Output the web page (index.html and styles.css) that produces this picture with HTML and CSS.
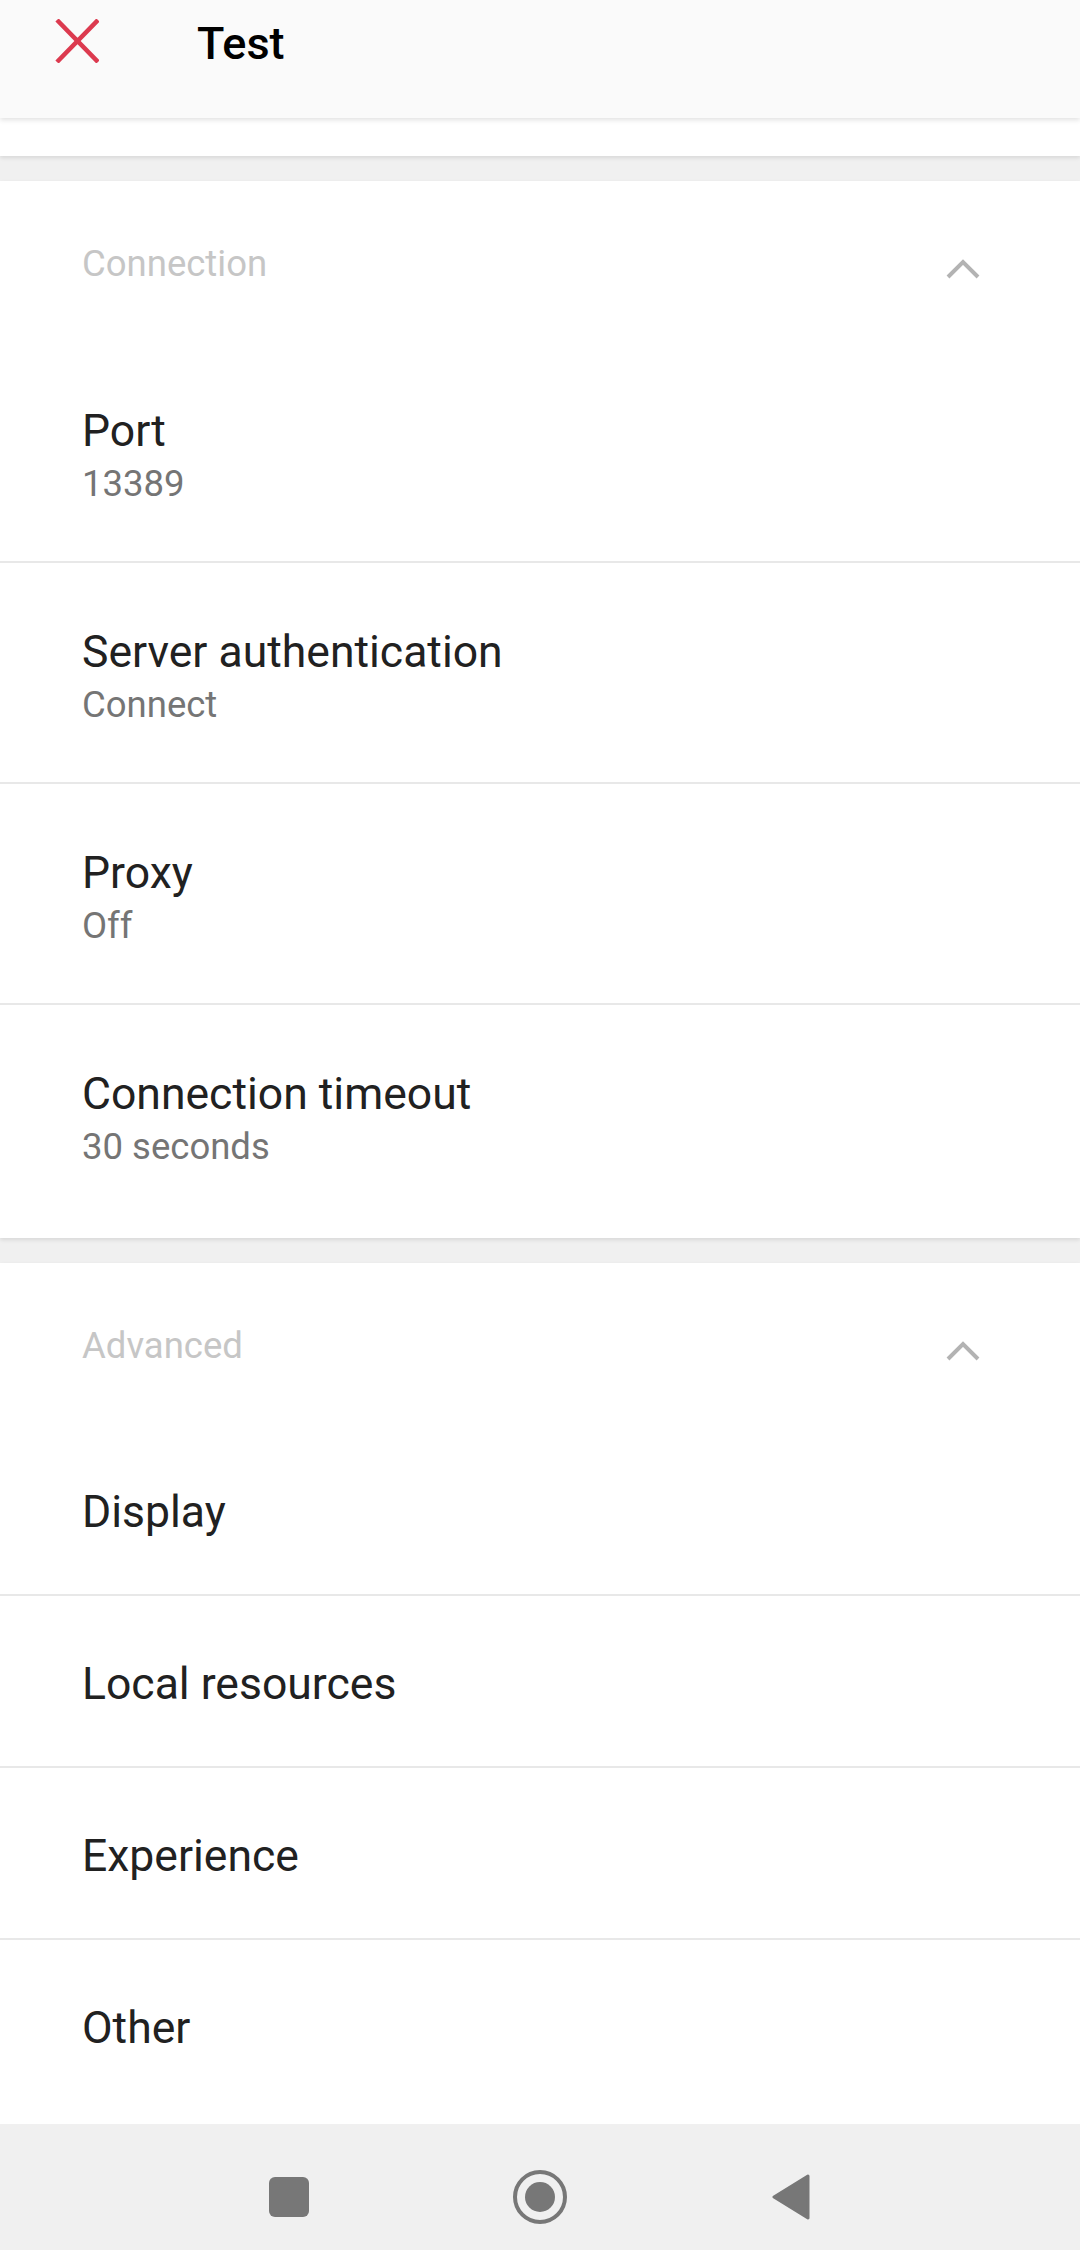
FILE: index.html
```html
<!DOCTYPE html>
<html lang="en">
<head>
    <meta charset="UTF-8">
    <meta name="viewport" content="width=device-width, initial-scale=1.0">
    <title>Test</title>
    <link rel="stylesheet" href="styles.css">
</head>
<body>
    <div class="app">
        <header class="toolbar">
            <svg class="close-icon" width="44" height="44" viewBox="0 0 44 44">
                <path d="M2 1 L43 43 M43 1 L2 43" stroke="#dc3a4f" stroke-width="4.5" fill="none"/>
            </svg>
            <span class="toolbar-title">Test</span>
        </header>

        <div class="peek"></div>

        <main class="content">
            <section class="card">
                <div class="card-header">
                    <span class="card-title">Connection</span>
                    <svg class="chevron" width="34" height="22" viewBox="0 0 34 22">
                        <path d="M2 19 L17 4 L32 19" stroke="#b3b3b3" stroke-width="4" fill="none"/>
                    </svg>
                </div>
                <div class="row">
                    <div class="row-title">Port</div>
                    <div class="row-sub">13389</div>
                </div>
                <div class="row">
                    <div class="row-title">Server authentication</div>
                    <div class="row-sub">Connect</div>
                </div>
                <div class="row">
                    <div class="row-title">Proxy</div>
                    <div class="row-sub">Off</div>
                </div>
                <div class="row">
                    <div class="row-title">Connection timeout</div>
                    <div class="row-sub">30 seconds</div>
                </div>
            </section>

            <section class="card">
                <div class="card-header">
                    <span class="card-title">Advanced</span>
                    <svg class="chevron" width="34" height="22" viewBox="0 0 34 22">
                        <path d="M2 19 L17 4 L32 19" stroke="#b3b3b3" stroke-width="4" fill="none"/>
                    </svg>
                </div>
                <div class="row single">
                    <div class="row-title">Display</div>
                </div>
                <div class="row single">
                    <div class="row-title">Local resources</div>
                </div>
                <div class="row single">
                    <div class="row-title">Experience</div>
                </div>
                <div class="row single">
                    <div class="row-title">Other</div>
                </div>
            </section>
        </main>

        <nav class="navbar">
            <div class="nav-slot">
                <svg width="40" height="40" viewBox="0 0 40 40">
                    <rect x="0" y="0" width="40" height="40" rx="6" fill="#777777"/>
                </svg>
            </div>
            <div class="nav-slot">
                <svg width="56" height="56" viewBox="0 0 56 56">
                    <circle cx="28" cy="28" r="25" stroke="#777777" stroke-width="4" fill="none"/>
                    <circle cx="28" cy="28" r="15" fill="#777777"/>
                </svg>
            </div>
            <div class="nav-slot">
                <svg width="40" height="46" viewBox="0 0 40 46">
                    <path d="M37 2 L3 23 L37 44 Z" fill="#777777" stroke="#777777" stroke-width="3" stroke-linejoin="round"/>
                </svg>
            </div>
        </nav>
    </div>
</body>
</html>
```

FILE: styles.css
```css
body {
    margin: 0;
    font-family: Roboto, 'Noto Sans', sans-serif;
    background-color: #f0f0f0;
}

.app {
    width: 1080px;
    height: 2250px;
    display: flex;
    flex-direction: column;
    overflow: hidden;
}

.toolbar {
    position: relative;
    z-index: 2;
    height: 118px;
    box-sizing: border-box;
    padding: 19px 0 0 55px;
    display: flex;
    align-items: flex-start;
    background-color: #fafafa;
    box-shadow: 0 2px 5px rgba(0, 0, 0, 0.12);
}

.close-icon {
    display: block;
}

.toolbar-title {
    margin-left: 98px;
    font-size: 45px;
    line-height: 50px;
    font-weight: 500;
    color: #000000;
}

.peek {
    position: relative;
    z-index: 1;
    height: 38px;
    background-color: #ffffff;
    box-shadow: 0 2px 4px rgba(0, 0, 0, 0.1);
}

.content {
    flex: 1;
    display: flex;
    flex-direction: column;
    gap: 25px;
    padding-top: 25px;
}

.card {
    background-color: #ffffff;
    padding-bottom: 14px;
    box-shadow: 0 2px 4px rgba(0, 0, 0, 0.1);
}

.card-header {
    height: 161px;
    box-sizing: border-box;
    padding: 63px 100px 0 82px;
    display: flex;
    justify-content: space-between;
    align-items: flex-start;
}

.card-title {
    font-size: 36.5px;
    line-height: 40px;
    color: #c6c6c6;
}

.chevron {
    display: block;
    margin-top: 14px;
}

.row {
    padding: 64px 0 52px 82px;
    border-bottom: 2px solid #e8e8e8;
}

.row:last-child {
    border-bottom: none;
}

.row.single {
    padding: 63px 0 57px 82px;
}

.row-title {
    font-size: 44.5px;
    line-height: 50px;
    color: #212121;
}

.row-sub {
    margin-top: 3px;
    font-size: 36.5px;
    line-height: 50px;
    color: #757575;
}

.navbar {
    height: 126px;
    box-sizing: border-box;
    padding-top: 20px;
    display: flex;
    justify-content: center;
    align-items: center;
    gap: 191px;
    background-color: #f0f0f0;
}

.nav-slot {
    width: 60px;
    display: flex;
    justify-content: center;
    align-items: center;
}

.nav-slot svg {
    display: block;
}
```
